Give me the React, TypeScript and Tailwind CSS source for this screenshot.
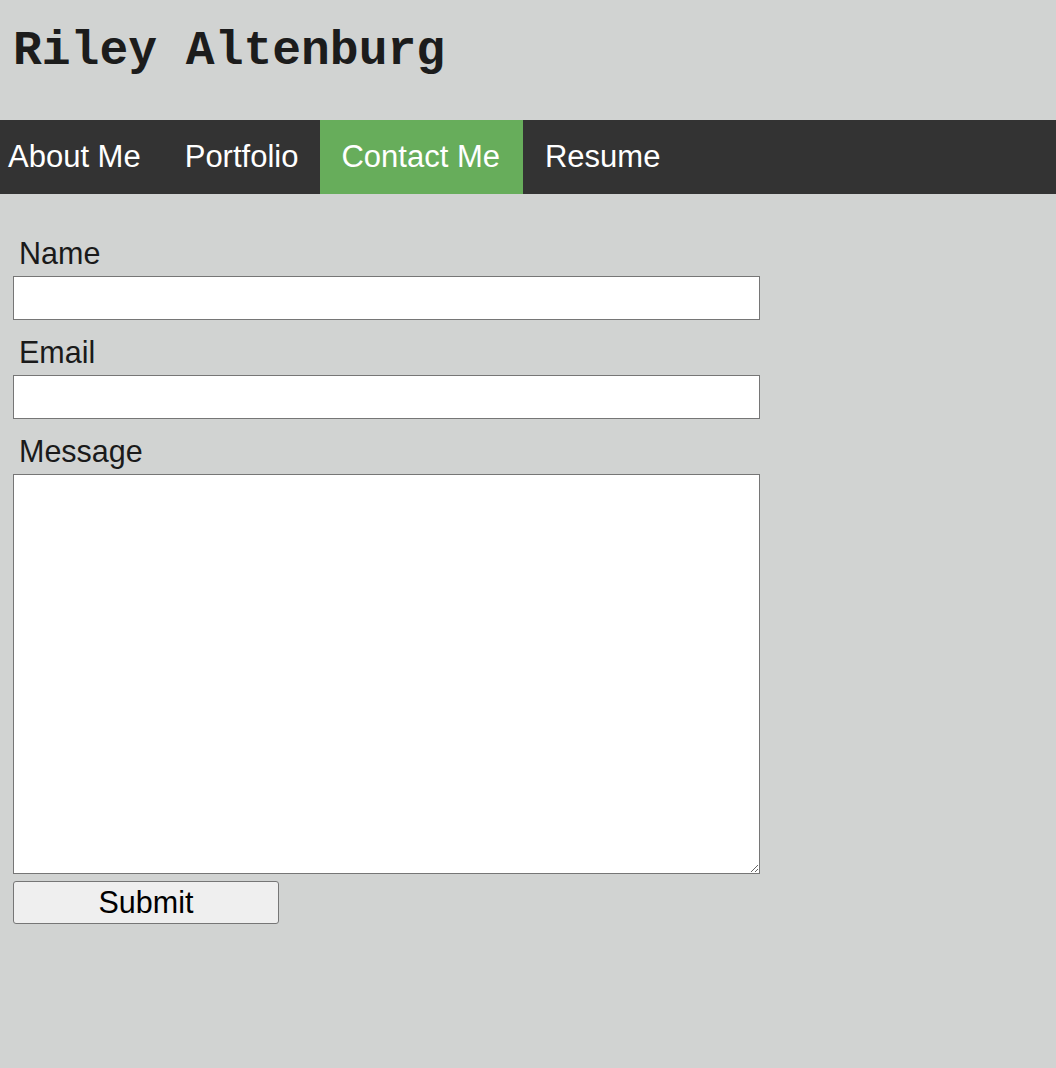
export default function App() {
  const sans = { fontFamily: '"Liberation Sans", Arial, sans-serif' };
  return (
    <div className="min-h-[1068px] w-full bg-[#d1d3d2]" style={sans}>
      <header className="h-[120px] pl-[13px] pt-[15px]">
        <h1
          className="text-[48px] font-bold leading-normal text-[#1c1c1c]"
          style={{ fontFamily: '"Liberation Mono", "Courier New", monospace' }}
        >
          Riley Altenburg
        </h1>
      </header>
      <nav className="flex h-[74px] bg-[#333333] text-[31px] text-white">
        <a className="flex items-center pl-[8px] pr-[22px]">About Me</a>
        <a className="flex items-center px-[22px]">Portfolio</a>
        <a className="flex items-center bg-[#67ad5b] pl-[21px] pr-[23px]">Contact Me</a>
        <a className="flex items-center px-[22px]">Resume</a>
      </nav>
      <form className="flex flex-col items-start pl-[13px] pt-[42px]">
        <label className="mb-[6px] block h-[34px] pl-[6px] text-[30.5px] leading-[34px] text-[#1a1a1a]">Name</label>
        <input className="h-[44px] w-[747px] border border-[#767676] bg-white" />
        <label className="mb-[6px] mt-[15px] block h-[34px] pl-[6px] text-[30.5px] leading-[34px] text-[#1a1a1a]">Email</label>
        <input className="h-[44px] w-[747px] border border-[#767676] bg-white" />
        <label className="mb-[6px] mt-[15px] block h-[34px] pl-[6px] text-[30.5px] leading-[34px] text-[#1a1a1a]">Message</label>
        <textarea className="block h-[400px] w-[747px] border border-[#767676] bg-white" />
        <button
          type="button"
          className="mt-[7px] flex h-[43px] w-[266px] items-center justify-center rounded-[3px] border border-[#767676] bg-[#efefef] text-[30.5px] text-black"
        >
          Submit
        </button>
      </form>
    </div>
  );
}
